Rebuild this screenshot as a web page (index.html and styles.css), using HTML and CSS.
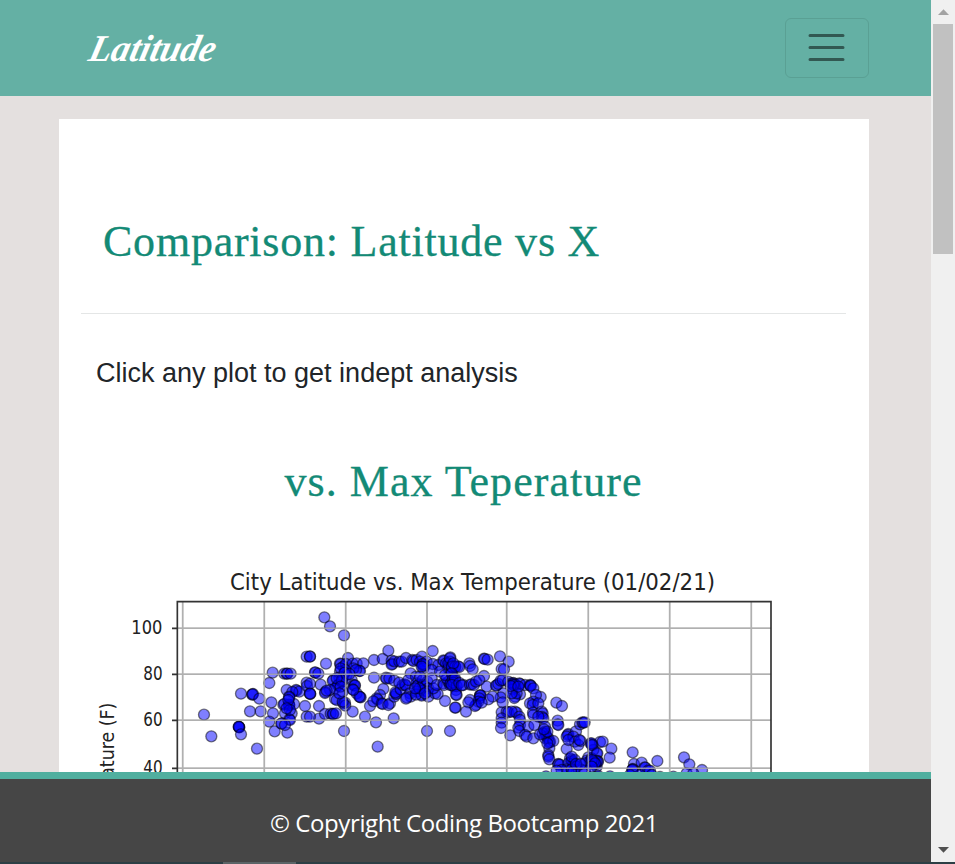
FILE: index.html
```html
<!DOCTYPE html>
<html lang="en">
<head>
<meta charset="utf-8">
<title>Latitude</title>
<link rel="stylesheet" href="styles.css">
</head>
<body>
<div class="window">
  <div class="page">
    <header class="navbar">
      <a class="brand"><svg width="150" height="60" viewBox="0 0 150 60"><text class="brand-text" transform="translate(5 43) skewX(-14)" textLength="126" lengthAdjust="spacingAndGlyphs">Latitude</text></svg></a>
      <button class="toggler" aria-label="Menu"><svg width="45" height="45" viewBox="0 0 30 30"><path d="M4 7h22M4 15h22M4 23h22" stroke="rgba(0,0,0,.5)" stroke-width="2" stroke-linecap="round"/></svg></button>
    </header>
    <main class="content">
      <section class="card">
        <h1 class="title"><span>Comparison: Latitude vs X</span></h1>
        <hr class="rule">
        <p class="intro">Click any plot to get indept analysis</p>
        <h2 class="subtitle">vs. Max Teperature</h2>
        <svg class="chart" width="700" height="300" viewBox="0 0 2100 900">
          <g class="grid">
            <path d="M278 125V900M523 125V900M767 125V900M1011 125V900M1250 125V900M1495 125V900M1739 125V900M1984 125V900"/>
            <path d="M262 205H2043M262 343H2043M262 481H2043M262 625H2043"/>
          </g>
          <g id="points" class="points"></g>
          <g class="grid over"><path d="M278 125V900M523 125V900M767 125V900M1011 125V900M1250 125V900M1495 125V900M1739 125V900M1984 125V900M262 205H2043M262 343H2043M262 481H2043M262 625H2043"/></g>
          <path class="axis" d="M262 900V125H2043V900M246 205H262M246 343H262M246 481H262M246 625H262"/>
          <g class="labels">
            <text x="420" y="91" class="chart-title" textLength="1455" lengthAdjust="spacingAndGlyphs">City Latitude vs. Max Temperature (01/02/21)</text>
            <text x="124" y="221" textLength="93" lengthAdjust="spacingAndGlyphs">100</text>
            <text x="160" y="359" textLength="58" lengthAdjust="spacingAndGlyphs">80</text>
            <text x="160" y="498" textLength="58" lengthAdjust="spacingAndGlyphs">60</text>
            <text x="160" y="642" textLength="58" lengthAdjust="spacingAndGlyphs">40</text>
            <text transform="translate(73 971) rotate(-90)" textLength="543" lengthAdjust="spacingAndGlyphs">Max Temperature (F)</text>
          </g>
        </svg>
      </section>
    </main>
    <footer class="footer"><span>© Copyright Coding Bootcamp 2021</span></footer>
  </div>
  <aside class="scrollbar">
    <svg width="24" height="24" viewBox="0 0 24 24"><path d="M7 15L12.500 9.200L18 15z" fill="#a3a3a3"/></svg>
    <div class="thumb"></div>
    <svg class="down" width="24" height="24" viewBox="0 0 24 24"><path d="M7 9L12.500 14.800L18 9z" fill="#505050"/></svg>
  </aside>
</div>
<div class="edge"><span></span></div>
<script src="script.js"></script>
</body>
</html>
```
FILE: styles.css
```css
* { box-sizing: border-box; }
body { margin: 0; width: 955px; height: 864px; overflow: hidden; background: #e4e0df; font-family: "Liberation Sans", sans-serif; }
.window { display: flex; height: 862px; }
.page { display: flex; flex-direction: column; width: 931px; height: 862px; }
.navbar { display: flex; flex: none; justify-content: space-between; align-items: center; height: 96px; padding: 0 62px 0 82px; background: #64b0a4; }
.brand { display: flex; }
.brand svg { overflow: visible; }
.brand-text { font: italic 700 38px "Brush Script MT", "Liberation Serif", serif; fill: #fff; }
.toggler { display: flex; align-items: center; justify-content: center; width: 84px; height: 60px; padding: 0 2px 1px 0; border: 1px solid #5aa094; border-radius: 6px; background: none; }
.toggler svg { fill: none; }
.content { flex: 1; min-height: 0; overflow: hidden; padding: 23px 62px 0 59px; background: #e4e0df; }
.card { height: 900px; padding: 97px 23px 0 22px; background: #fff; }
.title, .subtitle { margin: 0; font-family: Georgia, "Liberation Serif", serif; font-weight: 400; font-size: 44px; line-height: 52px; color: #138a76; white-space: nowrap; -webkit-text-stroke: .3px #138a76; }
.title { padding-left: 22px; letter-spacing: .77px; }
.rule { margin: 45px 0 0; border: 0; border-top: 1px solid #e4e6e6; }
.intro { margin: 41px 0 0 15px; font-size: 27px; line-height: 36px; color: #212529; white-space: nowrap; }
.subtitle { margin-top: 65px; text-align: center; letter-spacing: 1.03px; }
.chart { display: block; margin: 52px 0 0 9px; }
.grid { fill: none; stroke: #b0b0b0; stroke-width: 4.5; }
.over { opacity: .8; }
.axis { fill: none; stroke: #333; stroke-width: 5; }
.points { fill: rgba(0,0,255,.5); stroke: rgba(0,0,0,.5); stroke-width: 4; }
.labels { font-family: "DejaVu Sans", sans-serif; font-size: 57px; fill: #222; }
.chart-title { font-size: 67px; }
.footer { display: flex; flex: none; align-items: center; justify-content: center; height: 90px; border-top: 7px solid #50af9f; background: #464646; color: #fff; font-family: "Segoe UI", "Open Sans", sans-serif; font-size: 24px; letter-spacing: -.4px; padding: 3px 3px 0 0; }
.scrollbar { display: flex; flex-direction: column; align-items: center; width: 24px; background: #f0f0f0; }
.thumb { width: 20px; height: 230px; background: #c1c1c1; }
.down { margin-top: auto; }
.edge { height: 2px; padding-left: 223px; background: #2d3f45; }
.edge span { display: block; width: 73px; height: 2px; background: #5b6467; }
```
FILE: script.js
```js
// Scatter points by horizontal section of the plot: [section x, "x,y x,y ..."].
const sections = [
  [0, "342,464 364,529 453,401 487,403 487,404 489,402 508,416 447,501 447,501 448,502 446,500 453,523 501,566 480,454 512,454 548,338 538,369 583,341 590,341 592,341 602,341 650,290 660,289 676,338 544,427 549,460 538,485 554,514 592,518 590,390 620,392 618,390 628,395 607,396 650,368 651,378 660,401 661,402 645,438 650,470 597,434 597,434 598,436 580,434 583,432 612,432 597,410 598,412 595,420 585,460 605,460 598,478 600,480 575,490 574,491 585,495 600,450 590,445"],
  [660, "43,172 60,199 102,226 0,290 48,311 15,337 25,341 32,374 0,371 27,438 0,401 27,476 0,470 114,294 90,311 92,312 100,320 108,312 128,311 140,310 160,310 148,333 150,333 130,325 106,330 90,335 88,352 100,350 70,360 68,363 85,375 84,376 75,385 95,365 60,390 46,396 45,399 50,392 98,395 110,345 125,360 130,375 134,377 135,376 128,388 140,400 150,411 152,412 148,410 75,417 80,420 100,430 105,428 106,437 98,425 45,462 62,461 68,462 70,462 78,460 128,455 165,470 180,438 198,487 251,475 102,513 203,560 351,513 420,513 192,300 218,297 235,272 192,353 245,302 247,312 245,314 253,304 268,305 275,305 288,294 307,300 310,303 320,300 336,290 330,305 338,315 340,316 345,316 350,305 368,273 368,312 385,315 400,301 402,303 408,310 421,292 420,305 430,318 435,320 415,325 340,325 365,330 390,335 228,353 229,356 238,355 253,362 220,387 210,405 200,415 203,418 190,424 215,430 218,432 240,430 235,435 253,410 258,401 259,402 256,397 272,388 278,375 285,373 287,376 268,368 302,340 295,360 318,350 320,370 322,378 325,375 338,360 340,375 345,380 352,365 355,385 340,392 320,395 335,404 335,407 300,400 302,410 290,412 288,416 318,404 352,395 355,410 375,400 383,402 370,385 365,355 380,375 400,370 402,375 415,365 420,375 410,355 430,378 435,360 438,390 405,423 437,443 440,405 428,350 92,325 104,338 96,360 80,355 92,380 138,330 118,342 130,390 88,400 338,312 335,320 328,385 345,400 315,385 330,350 405,345 425,335 415,310 422,370"],
  [1080, "0,295 5,320 6,321 16,320 24,319 28,321 10,310 58,310 60,318 68,328 102,296 104,297 113,299 150,289 176,305 155,327 162,328 102,348 5,340 8,360 10,368 15,355 20,378 18,404 5,375 28,369 40,375 35,376 60,374 65,373 72,375 78,365 88,360 110,380 140,376 138,377 145,372 152,362 158,360 175,365 185,370 190,369 192,371 196,374 208,370 210,372 225,375 240,375 242,376 242,378 250,385 188,388 210,403 195,410 193,414 200,400 160,400 152,412 128,410 115,418 90,406 90,407 92,406 88,415 85,425 78,435 75,438 95,428 60,420 55,427 15,443 48,455 158,427 185,400 272,411 258,405 250,425 240,430 248,435 265,430 319,428 336,438 155,457 170,455 175,457 195,455 200,458 185,455 155,475 155,488 153,504 181,526 208,470 210,480 210,495 205,503 208,513 235,500 225,525 230,530 250,535 253,495 249,458 250,465 275,455 278,460 276,471 280,475 265,470 323,482 323,493 325,495 285,500 285,515 286,520 278,520 290,530 284,534 295,535 270,523 300,545 298,548 310,543 298,565 295,585 295,590 298,598 325,612 325,613 330,614 355,522 353,525 350,530 378,514 390,493 397,487 400,488 404,487 370,530 375,545 350,567 385,555 392,543 388,540 355,540 422,550 428,555 450,546 360,595 365,600 365,605 370,610 355,610 375,600 415,592 410,602 420,603 430,603 434,604 436,605 428,610 405,610 440,580 430,570 440,620 380,620 350,628 355,632 335,630 365,628 370,635 395,630 320,632 405,632 288,649 292,515 282,508 292,550 190,375 182,378 205,380 365,590 378,612 392,612 425,595 438,612"],
  [1500, "5,550 5,555 38,545 64,566 59,593 22,580 23,603 24,605 20,604 10,604 5,600 15,610 5,620 128,577 202,603 282,592 298,613 336,630 132,612 155,608 128,627 128,628 127,630 164,622 166,623 175,631 180,632 290,640 310,640 25,648 60,649 210,651 250,650 120,645 150,645 185,645"]
];

const layer = document.getElementById("points");
for (const [offset, list] of sections) {
  for (const pair of list.split(" ")) {
    const [x, y] = pair.split(",").map(Number);
    const dot = document.createElementNS("http://www.w3.org/2000/svg", "circle");
    dot.setAttribute("cx", offset + x);
    dot.setAttribute("cy", y);
    dot.setAttribute("r", 16.5);
    layer.appendChild(dot);
  }
}
```
